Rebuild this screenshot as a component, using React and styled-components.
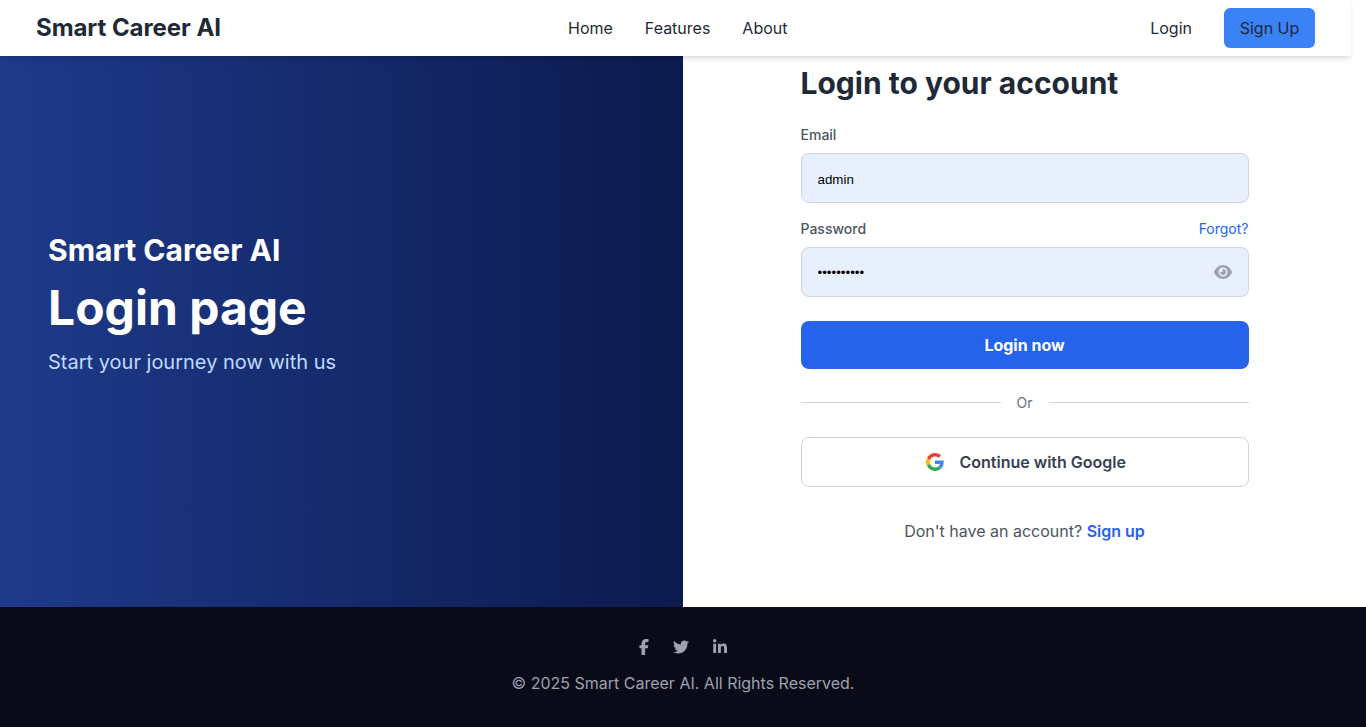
import React from "react";
import styled, { createGlobalStyle } from "styled-components";
import { FaEye, FaFacebookF, FaTwitter, FaLinkedinIn } from "react-icons/fa6";

const GlobalStyle = createGlobalStyle`
  *, *::before, *::after { box-sizing: border-box; }
  body {
    margin: 0;
    background: #fff;
    color: #1f2937;
    font-family: Inter, "Liberation Sans", sans-serif;
    font-size: 16px;
    line-height: 24px;
  }
  h1, h2, p { margin: 0; }
  a { text-decoration: none; }
  button { font-family: inherit; }
`;

const Page = styled.div`
  display: flex;
  flex-direction: column;
  height: 727px;
  overflow: hidden;
`;

const Header = styled.header`
  position: relative;
  z-index: 1;
  display: flex;
  align-items: center;
  flex: none;
  width: 1351px;
  height: 56px;
  padding: 0 36px;
  background: #fff;
  box-shadow: 0 4px 6px -1px rgba(0, 0, 0, 0.1), 0 2px 4px -1px rgba(0, 0, 0, 0.06);
`;

const Logo = styled.div`
  width: 185px;
  font-size: 24px;
  font-weight: 700;
  line-height: 32px;
  letter-spacing: -0.06px;
  white-space: nowrap;
`;

const Nav = styled.nav`
  display: flex;
  gap: 32px;
  margin-left: 347px;
`;

const NavLink = styled.a`
  color: #1f2937;
`;

const Actions = styled.div`
  display: flex;
  align-items: center;
  gap: 32px;
  margin-left: auto;
`;

const SignUpButton = styled.a`
  width: 91px;
  padding: 8px 0;
  border-radius: 6px;
  background: #3b82f6;
  color: #1f2937;
  text-align: center;
`;

const Main = styled.main`
  display: grid;
  grid-template-columns: 1fr 1fr;
  flex: none;
  height: 551px;
`;

const Hero = styled.section`
  display: flex;
  flex-direction: column;
  gap: 16px;
  padding: 176px 48px 0;
  background: linear-gradient(to right, #1e3a8a, #0c1a4d);
  color: #fff;
`;

const HeroBrand = styled.h2`
  font-size: 30px;
  font-weight: 700;
  line-height: 36px;
`;

const HeroTitle = styled.h1`
  font-size: 48px;
  font-weight: 700;
  line-height: 48px;
`;

const HeroText = styled.p`
  color: #bfdbfe;
  font-size: 20px;
  line-height: 28px;
`;

const FormPanel = styled.section`
  display: flex;
  justify-content: center;
  padding-top: 9px;
`;

const Form = styled.form`
  width: 448px;
`;

const FormTitle = styled.h2`
  margin-bottom: 24px;
  font-size: 30px;
  font-weight: 700;
  line-height: 36px;
`;

const Field = styled.div`
  margin-bottom: ${(p) => (p.$last ? 24 : 16)}px;
`;

const FieldHead = styled.div`
  display: flex;
  justify-content: space-between;
  margin-bottom: 8px;
  font-size: 14px;
  line-height: 20px;
`;

const Label = styled.label`
  color: #4b5563;
  font-weight: 500;
`;

const ForgotLink = styled.a`
  color: #2563eb;
`;

const InputBox = styled.div`
  display: flex;
  align-items: center;
  height: 50px;
  padding: 0 15.5px 0 16px;
  border: 1px solid #d1d5db;
  border-radius: 8px;
  background: #e8f0fe;

  svg {
    width: 18px;
    height: 16px;
    color: #9ca3af;
  }
`;

const Input = styled.input`
  flex: 1;
  min-width: 0;
  padding: ${(p) => (p.type === "text" ? 4 : 2)}px 0 0;
  border: 0;
  outline: 0;
  background: transparent;
  color: #000;
  font-family: "Liberation Sans", Arial, sans-serif;
  font-size: 13.333px;
  line-height: 20px;
`;

const SubmitButton = styled.button`
  display: block;
  width: 100%;
  height: 48px;
  border: 0;
  border-radius: 8px;
  background: #2563eb;
  color: #fff;
  font-size: 16px;
  font-weight: 700;
`;

const Divider = styled.div`
  display: flex;
  align-items: center;
  gap: 16px;
  margin: 24px 0;
  color: #6b7280;
  font-size: 14px;
  line-height: 20px;

  &::before,
  &::after {
    content: "";
    flex: 1;
    height: 1px;
    margin-bottom: 2px;
    background: #d1d5db;
  }
`;

const GoogleButton = styled.button`
  display: flex;
  align-items: center;
  justify-content: center;
  gap: 15.5px;
  width: 100%;
  height: 50px;
  padding: 0 0 0 3px;
  border: 1px solid #d1d5db;
  border-radius: 8px;
  background: #fff;
  color: #374151;
  font-size: 16px;
  font-weight: 600;
`;

const SignUpText = styled.p`
  margin-top: 32px;
  color: #4b5563;
  text-align: center;
`;

const SignUpLink = styled.a`
  color: #2563eb;
  font-weight: 600;
`;

const Footer = styled.footer`
  display: flex;
  flex-direction: column;
  align-items: center;
  flex: none;
  height: 120px;
  padding-top: 32px;
  background: #0a0a18;
  color: #9ca3af;
`;

const SocialLinks = styled.div`
  display: flex;
  gap: 24px;
  margin-bottom: 16px;
`;

const SocialLink = styled.a`
  display: flex;
  color: #9ca3af;

  svg {
    width: ${(p) => p.$width}px;
    height: 16px;
  }
`;

const GoogleLogo = () => (
  <svg width="18" height="18" viewBox="0 0 48 48">
    <path fill="#EA4335" d="M24 9.5c3.54 0 6.71 1.22 9.21 3.6l6.85-6.85C35.9 2.38 30.47 0 24 0 14.62 0 6.51 5.38 2.56 13.22l7.98 6.19C12.43 13.72 17.74 9.5 24 9.5z" />
    <path fill="#4285F4" d="M46.98 24.55c0-1.57-.15-3.09-.38-4.55H24v9.02h12.94c-.58 2.96-2.26 5.48-4.78 7.18l7.73 6c4.51-4.18 7.09-10.36 7.09-17.65z" />
    <path fill="#FBBC05" d="M10.53 28.59c-.48-1.45-.76-2.99-.76-4.59s.27-3.14.76-4.59l-7.98-6.19C.92 16.46 0 20.12 0 24c0 3.88.92 7.54 2.56 10.78l7.97-6.19z" />
    <path fill="#34A853" d="M24 48c6.48 0 11.93-2.13 15.89-5.81l-7.73-6c-2.15 1.45-4.92 2.3-8.16 2.3-6.26 0-11.57-4.22-13.47-9.91l-7.98 6.19C6.51 42.62 14.62 48 24 48z" />
  </svg>
);

export default function App() {
  return (
    <Page>
      <GlobalStyle />
      <Header>
        <Logo>Smart Career AI</Logo>
        <Nav>
          <NavLink href="#">Home</NavLink>
          <NavLink href="#">Features</NavLink>
          <NavLink href="#">About</NavLink>
        </Nav>
        <Actions>
          <NavLink href="#">Login</NavLink>
          <SignUpButton href="#">Sign Up</SignUpButton>
        </Actions>
      </Header>
      <Main>
        <Hero>
          <HeroBrand>Smart Career AI</HeroBrand>
          <HeroTitle>Login page</HeroTitle>
          <HeroText>Start your journey now with us</HeroText>
        </Hero>
        <FormPanel>
          <Form>
            <FormTitle>Login to your account</FormTitle>
            <Field>
              <FieldHead>
                <Label htmlFor="email">Email</Label>
              </FieldHead>
              <InputBox>
                <Input id="email" type="text" defaultValue="admin" />
              </InputBox>
            </Field>
            <Field $last>
              <FieldHead>
                <Label htmlFor="password">Password</Label>
                <ForgotLink href="#">Forgot?</ForgotLink>
              </FieldHead>
              <InputBox>
                <Input id="password" type="password" defaultValue="adminadmin" />
                <FaEye />
              </InputBox>
            </Field>
            <SubmitButton type="button">Login now</SubmitButton>
            <Divider>Or</Divider>
            <GoogleButton type="button">
              <GoogleLogo />
              Continue with Google
            </GoogleButton>
            <SignUpText>
              Don't have an account? <SignUpLink href="#">Sign up</SignUpLink>
            </SignUpText>
          </Form>
        </FormPanel>
      </Main>
      <Footer>
        <SocialLinks>
          <SocialLink href="#" $width={10}><FaFacebookF /></SocialLink>
          <SocialLink href="#" $width={16}><FaTwitter /></SocialLink>
          <SocialLink href="#" $width={14}><FaLinkedinIn /></SocialLink>
        </SocialLinks>
        <p>© 2025 Smart Career AI. All Rights Reserved.</p>
      </Footer>
    </Page>
  );
}
